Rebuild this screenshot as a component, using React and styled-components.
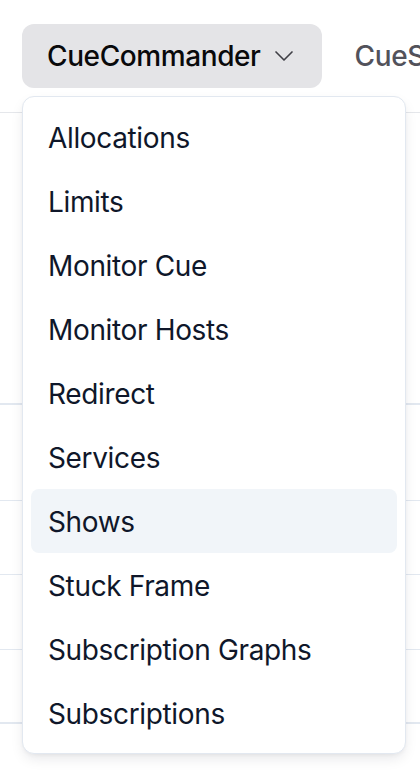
import React, { useState } from 'react';
import styled, { createGlobalStyle } from 'styled-components';
import { ChevronDown } from 'lucide-react';

const GlobalStyle = createGlobalStyle`
  html, body {
    margin: 0;
    padding: 0;
    background: #ffffff;
  }
  body {
    font-family: Inter, "Noto Sans", "Liberation Sans", sans-serif;
    -webkit-font-smoothing: antialiased;
  }
`;

const Page = styled.div`
  min-height: 772px;
  overflow: hidden;
`;

const Header = styled.header`
  position: relative;
  padding: 24px 0 24px 22px;
  border-bottom: 1px solid #e5e7eb;
`;

const NavList = styled.nav`
  display: flex;
  align-items: center;
  gap: 8px;
  white-space: nowrap;
`;

const Trigger = styled.button`
  display: flex;
  align-items: center;
  height: 64px;
  padding: 0 ${props => (props.open ? '22px' : '24px')} 0 25px;
  border: none;
  border-radius: 12px;
  background: ${props => (props.open ? '#e4e4e7' : 'transparent')};
  color: ${props => (props.open ? '#09090b' : '#52525b')};
  font-family: inherit;
  font-size: 28px;
  font-weight: 500;
  letter-spacing: -0.4px;
  cursor: pointer;

  svg {
    margin-left: 7px;
    color: #3f3f46;
  }
`;

const Menu = styled.ul`
  position: absolute;
  top: 96px;
  left: 22px;
  width: 366px;
  margin: 0;
  padding: 8px;
  list-style: none;
  background: #ffffff;
  border: 1px solid #e2e8f0;
  border-radius: 12px;
  box-shadow: 0 6px 14px -2px rgba(15, 23, 42, 0.1), 0 2px 5px -2px rgba(15, 23, 42, 0.08);
  z-index: 10;
`;

const MenuItem = styled.li`
  display: flex;
  align-items: center;
  height: 64px;
  padding: 0 17px;
  border-radius: 8px;
  background: ${props => (props.active ? '#f1f5f9' : 'transparent')};
  color: #0f172a;
  font-size: 28px;
  font-weight: 400;
  letter-spacing: -0.35px;
  padding-top: 1px;
  box-sizing: border-box;
  cursor: pointer;
`;

const Content = styled.main`
  padding-top: 290px;
`;

const Table = styled.div`
  border-top: 2px solid #e2e8f0;
`;

const Row = styled.div`
  height: ${props => props.h}px;
  border-bottom: ${props => (props.last ? '2px' : '1px')} solid #e2e8f0;
`;

const items = [
  'Allocations',
  'Limits',
  'Monitor Cue',
  'Monitor Hosts',
  'Redirect',
  'Services',
  'Shows',
  'Stuck Frame',
  'Subscription Graphs',
  'Subscriptions',
];

const rows = [95, 73, 74, 72];

export default function App() {
  const [hovered, setHovered] = useState('Shows');

  return (
    <Page>
      <GlobalStyle />
      <Header>
        <NavList>
          <Trigger open>
            CueCommander
            <ChevronDown size={32} strokeWidth={1.25} />
          </Trigger>
          <Trigger>CueSubmit</Trigger>
        </NavList>
        <Menu>
          {items.map(item => (
            <MenuItem
              key={item}
              active={hovered === item}
              onMouseEnter={() => setHovered(item)}
            >
              {item}
            </MenuItem>
          ))}
        </Menu>
      </Header>
      <Content>
        <Table>
          {rows.map((h, i) => (
            <Row key={i} h={h} last={i === rows.length - 1} />
          ))}
        </Table>
      </Content>
    </Page>
  );
}
